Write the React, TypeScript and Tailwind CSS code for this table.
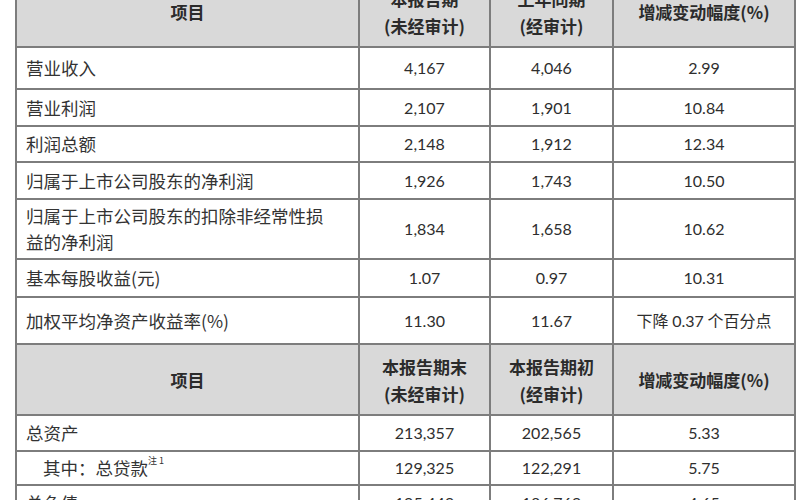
import React from 'react'

const cjk = "font-['Noto_Sans_CJK_SC',sans-serif]"
const num = "font-['Lato','Noto_Sans_CJK_SC',sans-serif]"

type Row = { label: React.ReactNode; a: string; b: string; c: React.ReactNode; h: string }

const top: Row[] = [
  { label: '营业收入', a: '4,167', b: '4,046', c: '2.99', h: 'h-[42px]' },
  { label: '营业利润', a: '2,107', b: '1,901', c: '10.84', h: 'h-[37px]' },
  { label: '利润总额', a: '2,148', b: '1,912', c: '12.34', h: 'h-[36px]' },
  { label: '归属于上市公司股东的净利润', a: '1,926', b: '1,743', c: '10.50', h: 'h-[37px]' },
  {
    label: (
      <>
        归属于上市公司股东的扣除非经常性损
        <br />
        益的净利润
      </>
    ),
    a: '1,834',
    b: '1,658',
    c: '10.62',
    h: 'h-[60px]',
  },
  { label: '基本每股收益(元)', a: '1.07', b: '0.97', c: '10.31', h: 'h-[38px]' },
  {
    label: '加权平均净资产收益率(%)',
    a: '11.30',
    b: '11.67',
    c: <span className={cjk}>下降 <span className={num}>0.37</span> 个百分点</span>,
    h: 'h-[47px]',
  },
]

const bottom: Row[] = [
  { label: '总资产', a: '213,357', b: '202,565', c: '5.33', h: 'h-[36px]' },
  {
    label: (
      <span className="pl-[17px]">
        其中：总贷款<sup className="text-[9px] align-super">注 1</sup>
      </span>
    ),
    a: '129,325',
    b: '122,291',
    c: '5.75',
    h: 'h-[34px]',
  },
  { label: '总负债', a: '195,449', b: '186,769', c: '4.65', h: 'h-[36px]' },
]

const cell = 'border-2 border-[#7d7d7d]'

function Header({ a1, b1 }: { a1: string; b1: string }) {
  return (
    <tr className="h-[71px] bg-[#d9d9d9] font-bold text-[17px] leading-[27px] text-[#2b2b2b]">
      <td className={`${cell} text-center`}>项目</td>
      <td className={`${cell} text-center`}>
        {a1}
        <br />
        (未经审计)
      </td>
      <td className={`${cell} text-center`}>
        {b1}
        <br />
        (经审计)
      </td>
      <td className={`${cell} text-center`}>增减变动幅度(%)</td>
    </tr>
  )
}

function Body({ rows }: { rows: Row[] }) {
  return (
    <>
      {rows.map((r, i) => (
        <tr key={i} className={`${r.h} bg-white`}>
          <td className={`${cell} pl-[9px] text-[17.5px] leading-[26px] text-[#333]`}>{r.label}</td>
          <td className={`${cell} ${num} text-center text-[16px] text-[#2e2e2e]`}>{r.a}</td>
          <td className={`${cell} ${num} text-center text-[16px] text-[#2e2e2e]`}>{r.b}</td>
          <td className={`${cell} ${num} text-center text-[16px] text-[#2e2e2e]`}>{r.c}</td>
        </tr>
      ))}
    </>
  )
}

export default function App() {
  return (
    <div className={`w-[800px] h-[500px] overflow-hidden bg-white ${cjk}`}>
      <div className="pl-[15px] mt-[-25px]">
        <table className="table-fixed border-collapse w-[779px]">
          <colgroup>
            <col className="w-[343px]" />
            <col className="w-[131px]" />
            <col className="w-[123px]" />
            <col className="w-[182px]" />
          </colgroup>
          <tbody>
            <Header a1="本报告期" b1="上年同期" />
            <Body rows={top} />
            <Header a1="本报告期末" b1="本报告期初" />
            <Body rows={bottom} />
          </tbody>
        </table>
      </div>
    </div>
  )
}
